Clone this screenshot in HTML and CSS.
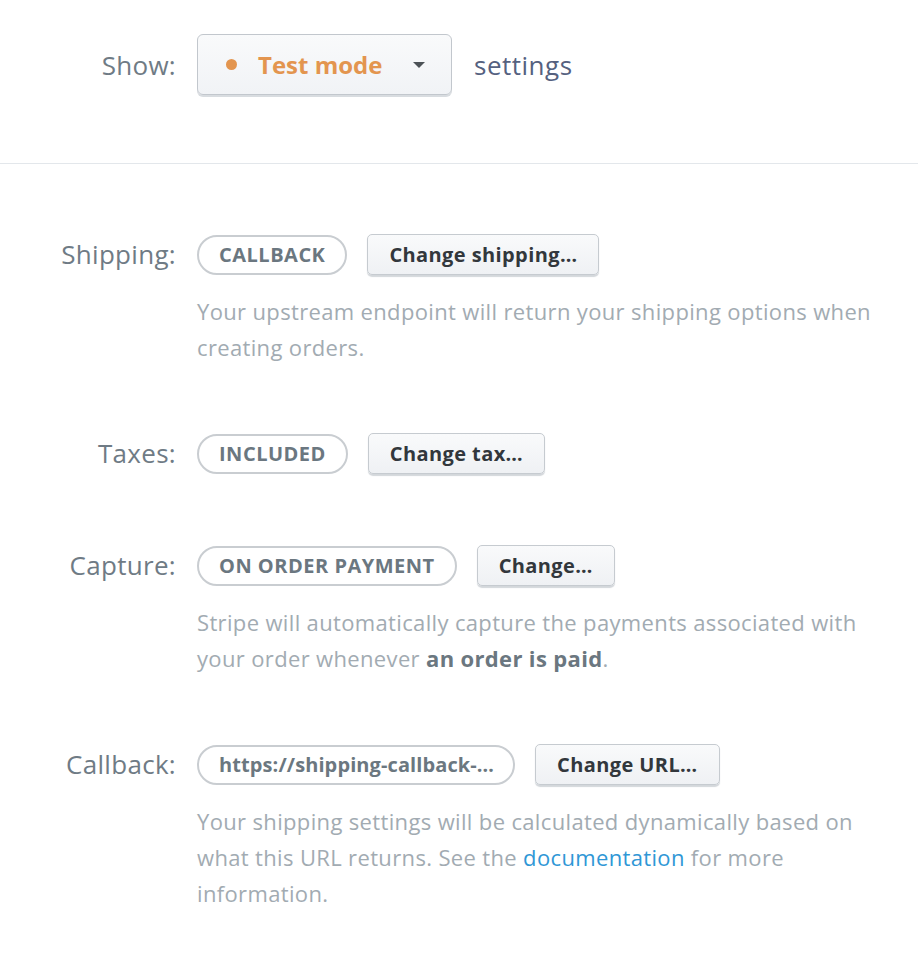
FILE: index.html
```html
<!DOCTYPE html>
<html>
<head>
<meta charset="utf-8">
<link rel="stylesheet" href="styles.css">
</head>
<body>
<div class="page">
  <header class="head">
    <span class="label">Show:</span>
    <button class="select">
      <span class="dot"></span>
      <span class="select-text">Test mode</span>
      <span class="caret"></span>
    </button>
    <span class="settings">settings</span>
  </header>
  <main class="sections">
    <section class="row">
      <span class="label">Shipping:</span>
      <div class="body">
        <div class="controls">
          <span class="pill">CALLBACK</span>
          <button class="btn">Change shipping…</button>
        </div>
        <p class="desc">Your upstream endpoint will return your shipping options when creating orders.</p>
      </div>
    </section>
    <section class="row row-tight">
      <span class="label">Taxes:</span>
      <div class="body">
        <div class="controls">
          <span class="pill">INCLUDED</span>
          <button class="btn">Change tax…</button>
        </div>
      </div>
    </section>
    <section class="row">
      <span class="label">Capture:</span>
      <div class="body">
        <div class="controls">
          <span class="pill">ON ORDER PAYMENT</span>
          <button class="btn">Change…</button>
        </div>
        <p class="desc">Stripe will automatically capture the payments associated with your order whenever <strong>an order is paid</strong>.</p>
      </div>
    </section>
    <section class="row">
      <span class="label">Callback:</span>
      <div class="body">
        <div class="controls">
          <span class="pill url">https://shipping-callback-…</span>
          <button class="btn">Change URL…</button>
        </div>
        <p class="desc">Your shipping settings will be calculated dynamically based on what this URL returns. See the <a href="#">documentation</a> for more information.</p>
      </div>
    </section>
  </main>
</div>
</body>
</html>
```
FILE: styles.css
```css
html, body {
  margin: 0;
  padding: 0;
  background: #ffffff;
}
body {
  font-family: "Open Sans", "Noto Sans", sans-serif;
  -webkit-font-smoothing: antialiased;
}
.page {
  width: 918px;
}
.head {
  display: flex;
  align-items: center;
  height: 164px;
  box-sizing: border-box;
  padding: 0 0 34px 0;
  border-bottom: 1px solid #e3e7eb;
}
.label {
  width: 176px;
  flex: none;
  text-align: right;
  box-sizing: border-box;
  font-size: 26px;
  color: #6f7b85;
  letter-spacing: 0.3px;
}
.select {
  margin-left: 21px;
  display: flex;
  align-items: center;
  width: 255px;
  height: 61px;
  box-sizing: border-box;
  padding: 0 26px 0 28px;
  background: linear-gradient(#f9fafb, #f1f3f6);
  border: 1px solid #c2c7cd;
  border-radius: 6px;
  box-shadow: 0 2px 0 #d8dce0;
  font-family: inherit;
  cursor: pointer;
}
.dot {
  width: 11px;
  height: 11px;
  border-radius: 50%;
  background: #e3954f;
  flex: none;
}
.select-text {
  margin-left: 21px;
  font-size: 24px;
  font-weight: 700;
  color: #e3954f;
  flex: 1;
  text-align: left;
  letter-spacing: 0;
}
.caret {
  width: 0;
  height: 0;
  border-left: 6px solid transparent;
  border-right: 6px solid transparent;
  border-top: 6px solid #4c5257;
}
.settings {
  margin-left: 22px;
  font-size: 26px;
  color: #55617f;
  letter-spacing: 0.5px;
}
.sections {
  display: flex;
  flex-direction: column;
  gap: 68px;
  padding-top: 70px;
}
.row {
  display: flex;
  align-items: flex-start;
}
.row-tight {
  margin-bottom: 3px;
}
.row > .label {
  line-height: 40px;
}
.body {
  margin-left: 21px;
  display: flex;
  flex-direction: column;
}
.controls {
  display: flex;
  align-items: center;
  gap: 20px;
}
.pill {
  display: inline-flex;
  align-items: center;
  justify-content: center;
  height: 40px;
  box-sizing: border-box;
  padding: 0 20px;
  border: 2px solid #c9cdd1;
  border-radius: 20px;
  font-size: 20px;
  font-weight: 700;
  color: #6b7780;
  letter-spacing: 0.5px;
}
.pill.url {
  padding: 0 19px 0 20px;
  letter-spacing: 0.1px;
}
.btn {
  height: 41px;
  box-sizing: border-box;
  padding: 0 21px;
  background: linear-gradient(#f9fafb, #eff1f4);
  border: 1px solid #c6cbd0;
  border-radius: 5px;
  box-shadow: 0 2px 1px #d3d7db;
  font-family: inherit;
  font-size: 20px;
  font-weight: 700;
  color: #32373c;
  letter-spacing: 0.4px;
  cursor: pointer;
}
.desc {
  margin: 18px 0 0 0;
  width: 680px;
  font-size: 22px;
  line-height: 36px;
  color: #a2abb2;
  letter-spacing: 0.35px;
}
.desc strong {
  color: #6b7780;
  font-weight: 700;
}
.desc a {
  color: #2f97d6;
  text-decoration: none;
}
```
